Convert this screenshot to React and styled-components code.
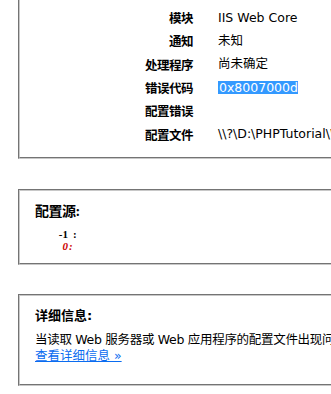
import React from 'react';
import styled, { createGlobalStyle } from 'styled-components';

const GlobalStyle = createGlobalStyle`
    html, body {
        margin: 0;
        padding: 0;
        background: #ffffff;
        overflow: hidden;
    }
    body {
        font-family: "DejaVu Sans", "Noto Sans CJK SC", sans-serif;
        font-size: 12.5px;
        color: #000000;
    }
`;

const Page = styled.div`
    padding-left: 18px;
    width: 420px;
`;

const Box = styled.fieldset`
    box-sizing: border-box;
    margin: ${(props) => props.top}px 0 0 0;
    padding: ${(props) => props.pad};
    border: 2px groove #c8c8c8;
    min-width: 0;
`;

const InfoTable = styled.div`
    display: grid;
    grid-template-columns: 173px 1fr;
    column-gap: 25px;
    grid-auto-rows: 23.33px;
    align-items: center;
`;

const Label = styled.div`
    text-align: right;
    font-weight: bold;
    white-space: nowrap;
    letter-spacing: -0.5px;
`;

const Value = styled.div`
    white-space: nowrap;
    line-height: 14px;
`;

const Selected = styled.span`
    background: #3399ff;
    color: #ffffff;
    padding: 0 0 0 1px;
    line-height: 13px;
    display: inline-block;
`;

const SourceTitle = styled.h4`
    margin: 0 0 8px 0;
    font-family: "Liberation Serif", "Noto Sans CJK SC", serif;
    font-size: 14px;
    line-height: 16px;
    font-weight: bold;
    letter-spacing: -0.5px;
`;

const CodeLine = styled.div`
    display: flex;
    font-family: "Liberation Serif", serif;
    font-size: 11px;
    line-height: 12.5px;
    height: 12.5px;
    font-weight: bold;
    color: ${(props) => props.hot ? '#cc0000' : '#000000'};
    font-style: ${(props) => props.hot ? 'italic' : 'normal'};
`;

const LineNo = styled.span`
    width: 33px;
    text-align: right;
    padding-right: ${(props) => props.gap}px;
`;

const Title = styled.h4`
    margin: 0 0 8px 0;
    font-size: 13px;
    line-height: 16px;
    font-weight: bold;
`;

const Text = styled.div`
    line-height: 16px;
    white-space: nowrap;
    letter-spacing: -0.3px;
`;

const MoreLink = styled.a`
    color: #0a6cf0;
    text-decoration: underline;
    line-height: 16px;
    display: inline-block;
    cursor: pointer;
`;

const rows = [
    ['模块', 'IIS Web Core'],
    ['通知', '未知'],
    ['处理程序', '尚未确定'],
    ['错误代码', '0x8007000d', true],
    ['配置错误', ''],
    ['配置文件', '\\\\?\\D:\\PHPTutorial\\WWW\\web.config'],
];

export default function App() {
    return (
        <>
            <GlobalStyle />
            <Page>
                <Box top={-24} pad="28px 0 11px 0">
                    <InfoTable>
                        {rows.map(([label, value, sel]) => (
                            <React.Fragment key={label}>
                                <Label>{label}</Label>
                                <Value>{sel ? <Selected>{value}</Selected> : value}</Value>
                            </React.Fragment>
                        ))}
                    </InfoTable>
                </Box>

                <Box top={30} pad="13px 15px 10px 15px">
                    <SourceTitle>配置源:</SourceTitle>
                    <CodeLine>
                        <LineNo gap={5}>-1</LineNo>:
                    </CodeLine>
                    <CodeLine hot>
                        <LineNo gap={1}>0</LineNo>:
                    </CodeLine>
                </Box>

                <Box top={29} pad="12px 15px 20px 15px">
                    <Title>详细信息:</Title>
                    <Text>当读取 Web 服务器或 Web 应用程序的配置文件出现问题时，会发生此错误。</Text>
                    <MoreLink>查看详细信息 »</MoreLink>
                </Box>
            </Page>
        </>
    );
}
